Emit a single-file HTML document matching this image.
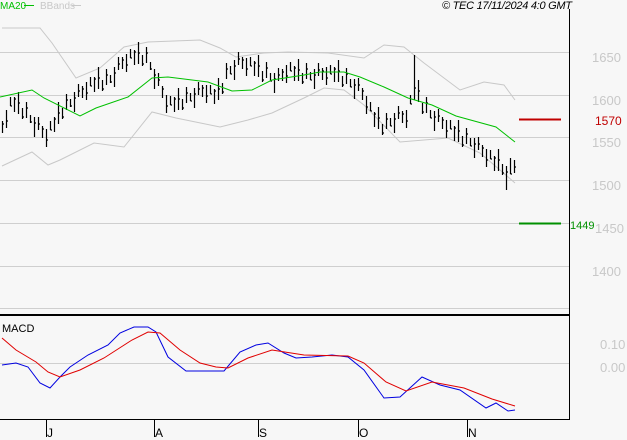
<!DOCTYPE html>
<html><head><meta charset="utf-8"><style>
html,body{margin:0;padding:0;background:#f7f7f7;width:627px;height:440px;overflow:hidden}
svg{display:block;font-family:"Liberation Sans",sans-serif}
</style></head><body>
<svg width="627" height="440" viewBox="0 0 627 440" xmlns="http://www.w3.org/2000/svg">
<rect width="627" height="440" fill="#f7f7f7"/>
<g stroke="#cfcfcf" stroke-width="1">
<line x1="0" y1="52.5" x2="569" y2="52.5"/>
<line x1="0" y1="95.5" x2="569" y2="95.5"/>
<line x1="0" y1="137.5" x2="569" y2="137.5"/>
<line x1="0" y1="180.5" x2="569" y2="180.5"/>
<line x1="0" y1="223.5" x2="569" y2="223.5"/>
<line x1="0" y1="266.5" x2="569" y2="266.5"/>
<line x1="0" y1="308.5" x2="569" y2="308.5"/>
<line x1="0" y1="363.5" x2="569" y2="363.5"/>
</g>
<line x1="569.5" y1="9" x2="569.5" y2="420" stroke="#000"/>
<line x1="0" y1="315" x2="569" y2="315" stroke="#000" stroke-width="2"/>
<line x1="0" y1="419.5" x2="569" y2="419.5" stroke="#000"/>
<g stroke="#000">
<line x1="46.5" y1="419" x2="46.5" y2="437"/>
<line x1="154.5" y1="419" x2="154.5" y2="437"/>
<line x1="258.5" y1="419" x2="258.5" y2="437"/>
<line x1="358.5" y1="419" x2="358.5" y2="437"/>
<line x1="467.5" y1="419" x2="467.5" y2="437"/>
</g>
<g font-size="12" fill="#000">
<text x="47" y="437">J</text><text x="155" y="437">A</text><text x="259" y="437">S</text><text x="359" y="437">O</text><text x="468" y="437">N</text>
</g>
<polyline fill="none" stroke="#c8c8c8" points="2,28 40,28 52,43 76,78 100,68 124,47 148,42 200,40 220,48 236,57 264,53 288,52 328,53 364,58 384,45 404,47 424,63 460,90 484,82 504,85 515,100"/>
<polyline fill="none" stroke="#c8c8c8" points="2,166 32,152 48,165 60,160 94,143 124,147 152,112 176,118 220,127 248,120 272,113 304,98 324,88 344,90 364,105 400,142 448,138 480,153 500,170 515,183"/>
<path fill="none" stroke="#000" stroke-width="1.2" d="M2.5 121V133M2.5 124H4M6.5 110V128M6.5 121H8M10.5 97V106M10.5 106H12M14.5 97V112M14.5 99H16M18.5 92V114M18.5 103H20M22.5 108V119M22.5 117H24M26.5 102V118M26.5 108H28M30.5 115V123M30.5 122H32M34.5 117V137M34.5 123H36M38.5 117V130M38.5 124H40M42.5 126V138M42.5 129H44M46.5 129V147M46.5 140H48M50.5 121V130M50.5 130H52M54.5 117V132M54.5 119H56M58.5 102V124M58.5 113H60M62.5 108V119M62.5 117H64M66.5 94V110M66.5 100H68M70.5 99V107M70.5 106H72M74.5 92V112M74.5 98H76M78.5 84V97M78.5 91H80M82.5 86V98M82.5 89H84M86.5 82V100M86.5 93H88M90.5 77V86M90.5 86H92M94.5 77V92M94.5 79H96M98.5 67V89M98.5 78H100M102.5 80V91M102.5 89H104M106.5 69V85M106.5 75H108M110.5 75V83M110.5 82H112M114.5 67V87M114.5 73H116M118.5 57V70M118.5 64H120M122.5 57V69M122.5 60H124M126.5 54V72M126.5 65H128M130.5 49V58M130.5 58H132M134.5 50V65M134.5 52H136M138.5 42V64M138.5 53H140M142.5 55V66M142.5 64H144M146.5 47V63M146.5 53H148M150.5 62V70M150.5 69H152M154.5 69V89M154.5 75H156M158.5 73V86M158.5 80H160M162.5 86V98M162.5 89H164M166.5 95V113M166.5 106H168M170.5 96V105M170.5 105H172M174.5 97V112M174.5 99H176M178.5 88V110M178.5 99H180M182.5 99V110M182.5 108H184M186.5 87V103M186.5 93H188M190.5 93V101M190.5 101H192M194.5 88V108M194.5 94H196M198.5 82V95M198.5 89H200M202.5 85V97M202.5 88H204M206.5 85V103M206.5 96H208M210.5 85V94M210.5 94H212M214.5 89V104M214.5 91H216M218.5 78V100M218.5 89H220M222.5 83V94M222.5 92H224M226.5 63V79M226.5 69H228M230.5 66V74M230.5 74H232M234.5 60V80M234.5 66H236M238.5 52V65M238.5 59H240M242.5 57V69M242.5 60H244M246.5 58V76M246.5 69H248M250.5 57V66M250.5 66H252M254.5 61V76M254.5 63H256M258.5 55V77M258.5 66H260M262.5 71V82M262.5 80H264M266.5 62V78M266.5 68H268M270.5 73V81M270.5 81H272M274.5 73V93M274.5 79H276M278.5 68V81M278.5 75H280M282.5 69V81M282.5 72H284M286.5 65V83M286.5 76H288M290.5 62V71M290.5 71H292M294.5 66V81M294.5 68H296M298.5 59V81M298.5 70H300M302.5 73V84M302.5 82H304M306.5 63V79M306.5 69H308M310.5 72V80M310.5 80H312M314.5 69V89M314.5 75H316M318.5 63V76M318.5 70H320M322.5 68V80M322.5 71H324M326.5 67V85M326.5 78H328M330.5 65V74M330.5 74H332M334.5 67V82M334.5 69H336M338.5 60V82M338.5 71H340M342.5 76V87M342.5 85H344M346.5 68V84M346.5 74H348M350.5 79V87M350.5 87H352M354.5 79V99M354.5 85H356M358.5 78V91M358.5 85H360M362.5 88V100M362.5 91H364M366.5 96V114M366.5 107H368M370.5 102V111M370.5 111H372M374.5 112V127M374.5 114H376M378.5 107V129M378.5 118H380M382.5 124V135M382.5 133H384M386.5 113V129M386.5 119H388M390.5 118V126M390.5 126H392M394.5 113V133M394.5 119H396M398.5 106V119M398.5 113H400M402.5 111V123M402.5 114H404M406.5 110V128M406.5 121H408M410.5 95V104M410.5 104H412M414.5 55V100M414.5 88H416M418.5 80V102M418.5 91H420M422.5 103V114M422.5 112H424M426.5 97V113M426.5 103H428M430.5 110V118M430.5 118H432M434.5 111V131M434.5 117H436M438.5 109V122M438.5 116H440M442.5 117V129M442.5 120H444M446.5 120V138M446.5 131H448M450.5 120V129M450.5 129H452M454.5 126V141M454.5 128H456M458.5 120V142M458.5 131H460M462.5 136V147M462.5 145H464M466.5 128V144M466.5 134H468M470.5 138V146M470.5 146H472M474.5 138V158M474.5 144H476M478.5 137V150M478.5 144H480M482.5 145V157M482.5 148H484M486.5 149V167M486.5 160H488M490.5 150V159M490.5 159H492M494.5 156V171M494.5 158H496M498.5 149V171M498.5 160H500M502.5 164V175M502.5 173H504M506.5 166V190M506.5 172H508M510.5 158V174M510.5 174H512M514.5 160V173M514.5 167H516"/>
<polyline fill="none" stroke="#00c000" points="0,97 32,90 44,98 80,116 96,108 128,97 152,78 168,77 208,82 232,91 252,90 272,80 304,75 320,72 344,72 360,77 384,87 408,98 432,105 456,116 496,127 515,142"/>
<line x1="519" y1="119.5" x2="561" y2="119.5" stroke="#c00000" stroke-width="2"/>
<text x="595" y="125" font-size="12" fill="#c00000">1570</text>
<line x1="519" y1="223.5" x2="561" y2="223.5" stroke="#009000" stroke-width="2"/>
<text x="570" y="229" font-size="11" fill="#009000">1449</text>
<g font-size="13" fill="#c8c8c8">
<text x="592" y="62">1650</text><text x="592" y="105">1600</text><text x="592" y="147">1550</text><text x="592" y="190">1500</text><text x="595" y="233">1450</text><text x="592" y="276">1400</text>
<text x="600" y="349">0.10</text><text x="600" y="372">0.00</text>
</g>
<text x="2" y="332" font-size="11" fill="#000">MACD</text>
<polyline fill="none" stroke="#0000e0" points="2,365 16,363 28,367 40,383 50,388 60,377 70,367 88,355 108,345 120,333 134,327 148,327 156,332 168,357 186,371 208,371 224,371 240,352 256,345 268,343 284,353 296,358 312,357 332,355 348,357 364,370 384,398 400,397 422,377 440,385 460,390 486,408 496,403 508,411 515,410"/>
<polyline fill="none" stroke="#e00000" points="2,338 16,350 36,362 48,372 60,377 80,370 104,358 132,340 148,332 160,333 180,350 200,363 216,367 228,368 248,358 272,350 304,355 348,356 364,363 386,382 406,391 432,382 464,388 492,399 515,406"/>
<text x="0" y="9" font-size="10" fill="#00c000">MA20</text>
<line x1="24" y1="5.5" x2="34" y2="5.5" stroke="#00c000"/>
<text x="40" y="9" font-size="10" fill="#c8c8c8">BBands</text>
<line x1="72" y1="5.5" x2="81" y2="5.5" stroke="#c8c8c8"/>
<text x="442" y="9" font-size="11" font-style="italic" fill="#000" textLength="130">© TEC 17/11/2024 4:0 GMT</text>
</svg>
</body></html>
